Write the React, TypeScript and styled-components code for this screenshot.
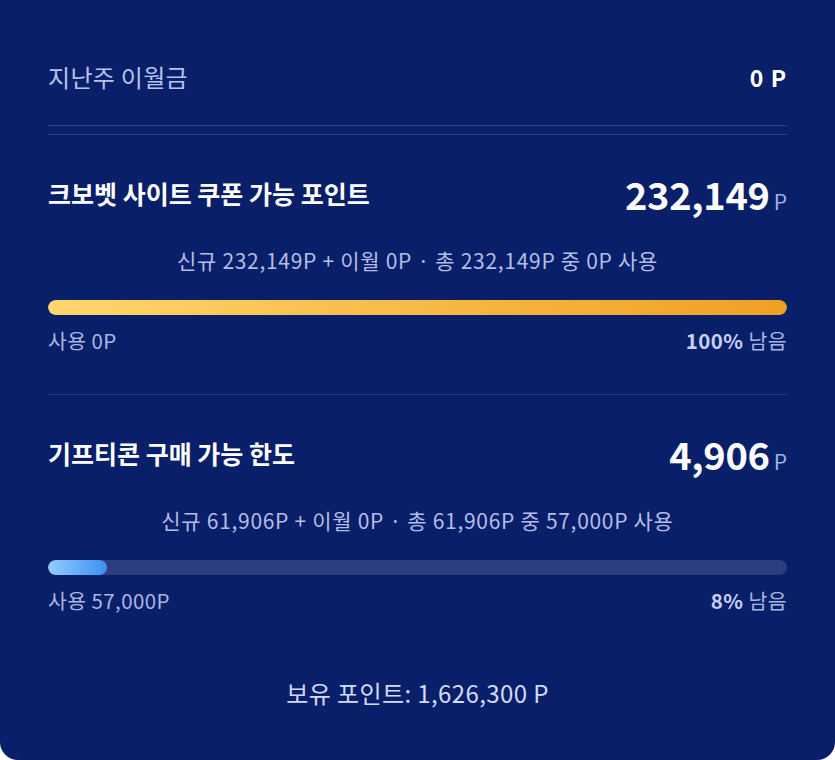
import styled, { createGlobalStyle } from 'styled-components';

const GlobalStyle = createGlobalStyle`
  html, body {
    margin: 0;
    padding: 0;
    background: #ffffff;
  }
  body {
    font-family: 'Noto Sans CJK KR', 'Noto Sans', sans-serif;
  }
`;

const Card = styled.div`
  background: #0a1f69;
  width: 835px;
  height: 760px;
  box-sizing: border-box;
  padding: 0 48px;
  border-radius: 0 0 18px 18px;
  display: flex;
  flex-direction: column;
`;

const CarryRow = styled.div`
  display: flex;
  justify-content: space-between;
  align-items: center;
  padding: 62px 0 33px;
  border-bottom: 1px solid rgba(255, 255, 255, 0.16);
  line-height: 30px;
`;

const CarryLabel = styled.span`
  font-size: 24px;
  letter-spacing: 0.3px;
  color: #b8c3ec;
`;

const CarryValue = styled.span`
  font-size: 23px;
  font-weight: 700;
  letter-spacing: 1px;
  color: #ffffff;
`;

const Section = styled.section<{ $first?: boolean }>`
  padding: 36px 0 41px;
  border-top: 1px solid rgba(255, 255, 255, ${(p) => (p.$first ? 0.16 : 0.12)});
  ${(p) => (p.$first ? 'margin-top: 8px;' : 'padding-bottom: 0;')}
`;

const Header = styled.div`
  display: flex;
  justify-content: space-between;
  align-items: center;
  height: 44px;
`;

const Title = styled.h2`
  margin: 0;
  font-size: 25px;
  font-weight: 700;
  color: #ffffff;
`;

const Amount = styled.div`
  display: flex;
  align-items: baseline;
  gap: 4px;
  color: #ffffff;
`;

const Number = styled.span`
  font-size: 38px;
  font-weight: 700;
  letter-spacing: -0.3px;
`;

const Unit = styled.span`
  font-size: 21px;
  color: #9fb0e6;
`;

const Detail = styled.p`
  margin: 32px 0 0;
  text-align: center;
  font-size: 21px;
  letter-spacing: 0.7px;
  line-height: 26px;
  color: #b3bee6;
`;

const Track = styled.div`
  margin-top: 27px;
  height: 15px;
  border-radius: 8px;
  background: rgba(255, 255, 255, 0.14);
  overflow: hidden;
`;

const Fill = styled.div<{ $tone: 'gold' | 'blue' }>`
  height: 100%;
  border-radius: 8px;
  background: ${(p) =>
    p.$tone === 'gold'
      ? 'linear-gradient(90deg, #fed76e 0%, #f5b43e 60%, #f0a023 100%)'
      : 'linear-gradient(90deg, #93ccff 0%, #3d8ff0 100%)'};
`;

const Legend = styled.div`
  margin-top: 12px;
  display: flex;
  justify-content: space-between;
  font-size: 20.5px;
  letter-spacing: 0.4px;
  line-height: 26px;
  color: #aab6e2;
`;

const Percent = styled.b`
  font-weight: 700;
  color: #c6d0f2;
  margin-right: 5px;
`;

const Footer = styled.div`
  margin-top: auto;
  padding-bottom: 52px;
  text-align: center;
  font-size: 24px;
  letter-spacing: 0.4px;
  line-height: 30px;
  color: #d3daf5;
`;

type Limit = {
  title: string;
  amount: string;
  detail: string;
  used: string;
  percent: number;
  left: string;
  tone: 'gold' | 'blue';
};

const limits: Limit[] = [
  {
    title: '크보벳 사이트 쿠폰 가능 포인트',
    amount: '232,149',
    detail: '신규 232,149P + 이월 0P · 총 232,149P 중 0P 사용',
    used: '사용 0P',
    percent: 100,
    left: '100%',
    tone: 'gold',
  },
  {
    title: '기프티콘 구매 가능 한도',
    amount: '4,906',
    detail: '신규 61,906P + 이월 0P · 총 61,906P 중 57,000P 사용',
    used: '사용 57,000P',
    percent: 8,
    left: '8%',
    tone: 'blue',
  },
];

const App = () => {
  return (
    <>
      <GlobalStyle />
      <Card>
        <CarryRow>
          <CarryLabel>지난주 이월금</CarryLabel>
          <CarryValue>0 P</CarryValue>
        </CarryRow>

        {limits.map((item, i) => (
          <Section key={item.title} $first={i === 0}>
            <Header>
              <Title>{item.title}</Title>
              <Amount>
                <Number>{item.amount}</Number>
                <Unit>P</Unit>
              </Amount>
            </Header>
            <Detail>{item.detail}</Detail>
            <Track>
              <Fill $tone={item.tone} style={{ width: `${item.percent}%` }} />
            </Track>
            <Legend>
              <span>{item.used}</span>
              <span>
                <Percent>{item.left}</Percent>남음
              </span>
            </Legend>
          </Section>
        ))}

        <Footer>보유 포인트: 1,626,300 P</Footer>
      </Card>
    </>
  );
};

export default App;
